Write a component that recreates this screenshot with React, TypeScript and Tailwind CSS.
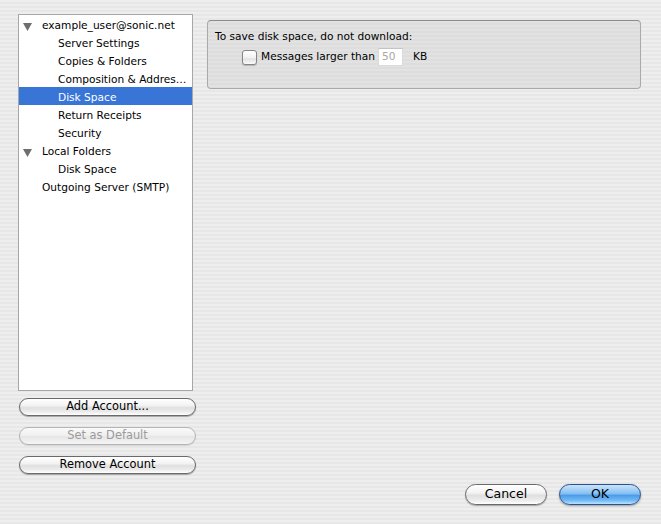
import React from "react";

type Row = { label: string; level: 0 | 1; twisty?: boolean; selected?: boolean };

const rows: Row[] = [
  { label: "example_user@sonic.net", level: 0, twisty: true },
  { label: "Server Settings", level: 1 },
  { label: "Copies & Folders", level: 1 },
  { label: "Composition & Addres…", level: 1 },
  { label: "Disk Space", level: 1, selected: true },
  { label: "Return Receipts", level: 1 },
  { label: "Security", level: 1 },
  { label: "Local Folders", level: 0, twisty: true },
  { label: "Disk Space", level: 1 },
  { label: "Outgoing Server (SMTP)", level: 0 },
];

const font = "font-['DejaVu_Sans',sans-serif]";

function Twisty() {
  return (
    <svg width="9" height="8" viewBox="0 0 9 8" className="absolute left-[4px] top-[8px]">
      <polygon points="0,0 9,0 4.5,8" fill="#6e6e6e" />
    </svg>
  );
}

function TreeRow({ row }: { row: Row }) {
  return (
    <div
      className={`relative h-[18px] pt-[3px] flex items-center whitespace-nowrap overflow-hidden ${
        row.selected ? "bg-[#3875d7] text-white" : "text-black"
      } ${row.level === 0 ? "pl-[23px]" : "pl-[39px]"}`}
    >
      {row.twisty && <Twisty />}
      <span>{row.label}</span>
    </div>
  );
}

function AquaButton({
  children,
  disabled,
  primary,
  className = "",
}: {
  children: React.ReactNode;
  disabled?: boolean;
  primary?: boolean;
  className?: string;
}) {
  let look =
    "border-[#6a6a6a] text-black bg-[linear-gradient(180deg,#ffffff_0%,#f3f3f3_40%,#e0e0e0_55%,#ececec_80%,#ffffff_100%)] shadow-[0_1px_1px_rgba(0,0,0,0.3)]";
  if (disabled)
    look =
      "border-[#b4b4b4] text-[#9b9b9b] bg-[linear-gradient(180deg,#fafafa_0%,#f0f0f0_45%,#e6e6e6_55%,#f5f5f5_100%)] shadow-[0_1px_1px_rgba(0,0,0,0.1)]";
  if (primary)
    look =
      "border-[#2d4f8c] text-black bg-[linear-gradient(180deg,#c9e4fb_0%,#86c0f2_45%,#4c9ceb_55%,#6fb8f3_80%,#b8e4ff_100%)] shadow-[0_1px_2px_rgba(0,0,0,0.35)]";
  return (
    <div className={`flex items-center justify-center rounded-full border ${look} ${className}`}>
      {children}
    </div>
  );
}

export default function App() {
  return (
    <div
      className={`w-[661px] h-[524px] overflow-hidden flex flex-col ${font} text-[10.6px] bg-[repeating-linear-gradient(180deg,#eeeeee_0px,#eeeeee_2px,#e7e7e7_2px,#e7e7e7_4px)]`}
    >
      <div className="flex pt-[14px] pl-[18px]">
        {/* account tree + buttons */}
        <div className="w-[178px] flex flex-col">
          <div className="w-[175px] h-[377px] bg-white border border-[#a7a7a7]">
            {rows.map((r, i) => (
              <TreeRow key={i} row={r} />
            ))}
          </div>
          <div className="mt-[7px] flex flex-col gap-[11px] pl-[1px] text-[11.4px]">
            <AquaButton className="h-[18px] w-[177px]">Add Account...</AquaButton>
            <AquaButton className="h-[18px] w-[177px]" disabled>
              Set as Default
            </AquaButton>
            <AquaButton className="h-[18px] w-[177px]">Remove Account</AquaButton>
          </div>
        </div>

        {/* disk space panel */}
        <div className="ml-[11px] mt-[6px]">
          <div className="w-[434px] h-[69px] rounded-[4px] border border-[#a9a9a9] border-t-[#8c8c8c] bg-[repeating-linear-gradient(180deg,#e2e2e2_0px,#e2e2e2_2px,#dddddd_2px,#dddddd_4px)] pl-[7px] pt-[8px] text-[10.6px]">
            <div className="text-black leading-[14px]">To save disk space, do not download:</div>
            <div className="flex items-center mt-[5px] pl-[27px]">
              <div className="w-[15px] h-[15px] rounded-[3px] border border-[#858585] bg-[linear-gradient(180deg,#ffffff_0%,#f2f2f2_50%,#e2e2e2_60%,#fafafa_100%)] shadow-[0_1px_1px_rgba(0,0,0,0.2)]" />
              <span className="ml-[4px] text-black">Messages larger than</span>
              <div className="ml-[3px] w-[25px] h-[18px] bg-white border border-[#dadada] border-t-[#c4c4c4] text-[#a8a8a8] pl-[3px] flex items-center">
                50
              </div>
              <span className="ml-[10px] text-black">KB</span>
            </div>
          </div>
        </div>
      </div>

      {/* dialog buttons */}
      <div className="flex justify-end gap-[12px] pr-[20px] mt-[10px] text-[12.5px]">
        <AquaButton className="h-[21px] w-[82px]">Cancel</AquaButton>
        <AquaButton className="h-[21px] w-[82px]" primary>
          OK
        </AquaButton>
      </div>
    </div>
  );
}
